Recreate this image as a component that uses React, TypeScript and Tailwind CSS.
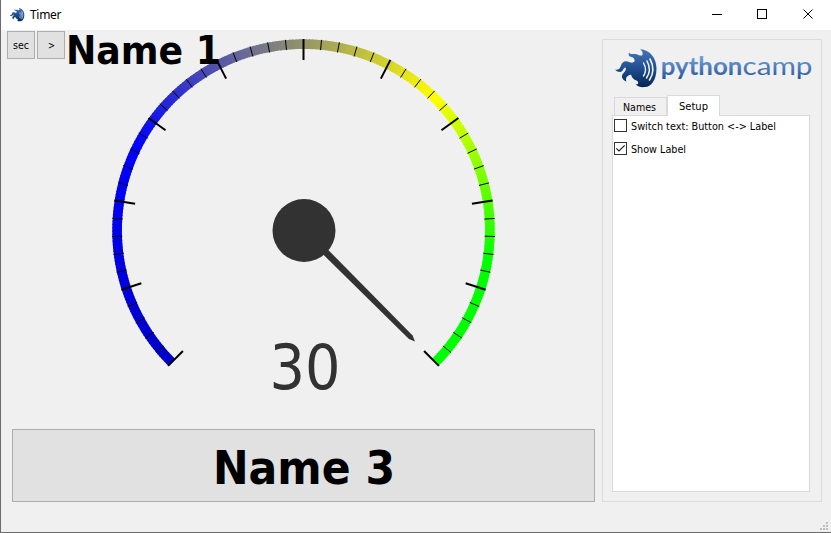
const CX = 303.5;
const CY = 230.5;

type Stop = [number, number, number, number];

// Colour stops over the full turn, counter-clockwise from the lower right end.
const STOPS: Stop[] = [
  [0, 0, 255, 0],
  [0.1, 0, 255, 0],
  [0.25, 255, 255, 0],
  [0.55, 0, 0, 255],
  [1, 0, 0, 130],
];

function colorAt(p: number) {
  for (let i = 1; i < STOPS.length; i++) {
    const a = STOPS[i - 1];
    const b = STOPS[i];
    if (p <= b[0]) {
      const t = (p - a[0]) / (b[0] - a[0]);
      const c = [1, 2, 3].map((k) => Math.round(a[k] + (b[k] - a[k]) * t));
      return `rgb(${c.join(",")})`;
    }
  }
  return "rgb(0,0,0)";
}

function point(deg: number, r: number): [number, number] {
  const a = (deg * Math.PI) / 180;
  return [CX + r * Math.cos(a), CY - r * Math.sin(a)];
}

const TAHOMA = "'DejaVu Sans Condensed', 'DejaVu Sans', sans-serif";

function Gauge() {
  const segments = [];
  for (let d = 0; d < 270; d += 1) {
    const end = Math.min(d + 1.4, 270);
    const pts = [point(d - 45, 191.2), point(end - 45, 191.2), point(end - 45, 181.6), point(d - 45, 181.6)];
    segments.push(<polygon key={d} points={pts.map((p) => p.join(",")).join(" ")} fill={colorAt((d + 0.5) / 360)} />);
  }
  const ticks = [];
  for (let i = 0; i <= 50; i++) {
    const major = i % 5 === 0;
    const [x1, y1] = point(-45 + i * 5.4, 191.5);
    const [x2, y2] = point(-45 + i * 5.4, major ? 170.5 : 181.2);
    ticks.push(<line key={i} x1={x1} y1={y1} x2={x2} y2={y2} stroke="#000" strokeWidth={major ? 2 : 1} />);
  }
  return (
    <svg className="block overflow-visible" width="595" height="400" viewBox="1 30 595 400">
      {segments}
      {ticks}
      <g fill="#323232">
        <circle cx="304" cy={CY} r="31.5" />
        <g transform={`translate(304 ${CY}) rotate(45)`}>
          <polygon points="0,-3.6 151,-2.6 157,0 151,2.6 0,3.6" />
        </g>
      </g>
      <text x="269.5" y="388.5" fontSize="63" textLength="71" lengthAdjust="spacingAndGlyphs" fontFamily={TAHOMA} fill="#323232">30</text>
      <text x="66" y="63.5" fontSize="39.5" fontWeight="700" textLength="155" lengthAdjust="spacingAndGlyphs" fontFamily={TAHOMA}>Name 1</text>
    </svg>
  );
}

function Flame({ className }: { className: string }) {
  return (
    <svg className={`overflow-visible ${className}`} viewBox="0 0 42 40">
      <defs>
        <linearGradient id="flame" x1="0" y1="0" x2="0" y2="1">
          <stop offset="0" stopColor="#4577b8" />
          <stop offset="0.5" stopColor="#204f91" />
          <stop offset="1" stopColor="#062653" />
        </linearGradient>
      </defs>
      <path
        fill="url(#flame)"
        d="M24 0C34 1 40.5 9 40.5 19.5C40.5 31 35 38 29 38C25 38.5 22 37.5 19.5 35.5C23 35.5 23 33 20.5 31.5C17 30.5 15.5 28 15 25.5C11 26.5 9 29 10.5 32.5C5.5 30.5 4.5 26.5 8 23.5C9.5 22 10.5 20 9.5 18.5C7.5 18 7.5 22.5 4 23C1.5 23 0 22 -0.8 20.5C3 21.5 4 19 5 16.5C6.5 12.5 9.5 11.5 13 13C15.5 14 17.8 14 18.5 12.5C19 10 17.5 8.5 15.5 8C13 7.5 12 6 13 3.5C14.5 6 17 4.5 19.5 5C22 5.5 24 7 26 6.5C27.5 5 26.5 2 24 0Z"
      />
      <g fill="none" stroke="#f0f4fa" strokeLinecap="round">
        <path strokeWidth="1.4" d="M27.5 14Q31.5 21 27.5 27" />
        <path strokeWidth="1.5" d="M31 12Q36 21 30.5 29" />
        <path strokeWidth="1.6" d="M34 10Q40 21 33.5 31" />
      </g>
    </svg>
  );
}

function Wordmark() {
  return (
    <svg className="block overflow-visible" width="154" height="40" viewBox="0 0 154 40">
      <defs>
        <linearGradient id="word" gradientUnits="userSpaceOnUse" x1="0" y1="6" x2="0" y2="32">
          <stop offset="0" stopColor="#77a7df" />
          <stop offset="1" stopColor="#214f91" />
        </linearGradient>
      </defs>
      <g fill="url(#word)" fontSize="25.5" fontFamily="Lato, sans-serif">
        <text x="2.8" y="26.3" fontWeight="700" textLength="81.5" lengthAdjust="spacingAndGlyphs">python</text>
        <text x="84.5" y="26.3" textLength="70" lengthAdjust="spacingAndGlyphs">camp</text>
      </g>
    </svg>
  );
}

function Label({ text, width }: { text: string; width: number }) {
  return (
    <svg className="block shrink-0 overflow-visible" width={width} height="14">
      <text x="0" y="11" fontSize="11" textLength={width} lengthAdjust="spacingAndGlyphs" fontFamily={TAHOMA}>{text}</text>
    </svg>
  );
}

function Check({ text, width, checked }: { text: string; width: number; checked?: boolean }) {
  return (
    <div className="flex h-[13px] items-center gap-1">
      <div className="size-[13px] shrink-0 border border-[#333] bg-white">
        {checked && (
          <svg className="block" width="11" height="11" viewBox="0 0 11 11" fill="none" stroke="#222" strokeWidth="1.2">
            <path d="M1.3 5.3L4 8L9.7 2.3" />
          </svg>
        )}
      </div>
      <Label text={text} width={width} />
    </div>
  );
}

export default function App() {
  return (
    <div className="relative flex h-[533px] w-[831px] flex-col overflow-hidden border-b border-l border-[#6c6c6c] bg-[#f0f0f0] text-black">
      <header className="flex h-[30px] shrink-0 items-center bg-white">
        <Flame className="ml-[9px] h-[14px] w-[15px]" />
        <span className="ml-[5px] font-['Noto_Sans',sans-serif] text-[12px] leading-[28px] tracking-[-0.3px]">Timer</span>
        <svg className="ml-auto block" width="120" height="30" viewBox="711 0 120 30" fill="none" stroke="#000" shapeRendering="crispEdges">
          <path d="M712 14.5H722M757.5 9.5H766.5V18.5H757.5Z" />
          <path shapeRendering="auto" d="M803.5 9.5L812.5 18.5M812.5 9.5L803.5 18.5" />
        </svg>
      </header>
      <div className="flex min-h-0 flex-1">
        <main className="relative w-[601px] shrink-0">
          <div className="h-[399px]">
            <Gauge />
          </div>
          <button className="ml-[11px] flex h-[73px] w-[583px] items-center justify-center border border-[#adadad] bg-[#e1e1e1]">
            <svg className="block overflow-visible" width="184" height="60">
              <text x="1" y="48" fontSize="47" fontWeight="700" textLength="182" lengthAdjust="spacingAndGlyphs" fontFamily={TAHOMA}>Name 3</text>
            </svg>
          </button>
          <div className="absolute top-[1px] left-[6px] flex gap-[2px]">
            <button className="flex size-[28px] items-center justify-center border border-[#adadad] bg-[#e1e1e1]">
              <Label text="sec" width={16} />
            </button>
            <button className="flex size-[28px] items-center justify-center border border-[#adadad] bg-[#e1e1e1]">
              <Label text=">" width={7} />
            </button>
          </div>
        </main>
        <aside className="mt-[9px] flex h-[463px] w-[220px] flex-col border border-[#dcdcdc] pl-[9px]">
          <div className="flex h-[55px] items-start pt-[9px] pl-[4px]">
            <Flame className="h-[40px] w-[42px] shrink-0" />
            <Wordmark />
          </div>
          <div className="flex h-[20px] items-end pl-px">
            <div className="ml-px flex h-[18px] w-[53px] border border-b-0 border-[#d9d9d9] bg-[#f0f0f0] pt-[2px] pl-[8px]">
              <Label text="Names" width={33} />
            </div>
            <div className="z-10 -mb-px flex h-[21px] w-[53px] justify-center border border-b-0 border-[#d9d9d9] bg-white pt-[3px]">
              <Label text="Setup" width={29} />
            </div>
          </div>
          <div className="flex h-[377px] w-[198px] flex-col gap-[10px] border border-[#d9d9d9] bg-white pt-[3px] pl-px">
            <Check text="Switch text: Button <-> Label" width={145} />
            <Check text="Show Label" width={55} checked />
          </div>
        </aside>
      </div>
      <svg className="absolute right-[3px] bottom-[2px]" width="8" height="8" fill="#bfbfbf">
        <path d="M6 0h2v2H6zM3 3h2v2H3zM6 3h2v2H6zM0 6h2v2H0zM3 6h2v2H3zM6 6h2v2H6z" />
      </svg>
    </div>
  );
}
